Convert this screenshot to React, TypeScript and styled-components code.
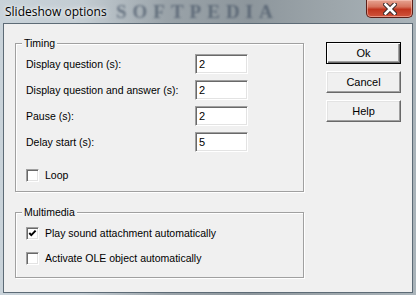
import React from "react";
import styled, { createGlobalStyle } from "styled-components";

const GlobalStyle = createGlobalStyle`
  html, body {
    margin: 0;
    padding: 0;
    background: #a9b6c0;
  }
  * {
    box-sizing: border-box;
  }
`;

const Window = styled.div`
  width: 416px;
  height: 295px;
  display: flex;
  flex-direction: column;
  overflow: hidden;
  background: linear-gradient(
    to right,
    #c9d3da 0%,
    #c3ccd2 20%,
    #9aa3a9 40%,
    #8d969c 60%,
    #9da6ab 80%,
    #aab4ba 100%
  );
  font-family: "Liberation Sans", Arial, sans-serif;
  font-size: 10.5px;
  color: #000;
`;

const TitleBar = styled.div`
  position: relative;
  height: 23px;
  flex: none;
  display: flex;
  align-items: flex-start;
`;

const Watermark = styled.span`
  position: absolute;
  left: 116px;
  top: 1px;
  font-family: "Liberation Serif", "DejaVu Serif", serif;
  font-weight: bold;
  font-size: 19px;
  line-height: 22px;
  letter-spacing: 6px;
  color: rgba(52, 68, 88, 0.55);
  filter: blur(1px);
  pointer-events: none;
`;

const Title = styled.span`
  position: relative;
  margin: 4px 0 0 5px;
  font-family: "Open Sans", "Noto Sans", sans-serif;
  font-size: 12px;
  line-height: 15px;
  color: #000;
  text-shadow: 0 0 6px rgba(255, 255, 255, 0.9), 0 0 3px rgba(255, 255, 255, 0.9);
`;

const CloseButton = styled.div`
  position: relative;
  margin-left: auto;
  margin-right: 3px;
  width: 47px;
  height: 18px;
  border: 1px solid #5b1f18;
  border-top: none;
  border-radius: 0 0 5px 5px;
  background: linear-gradient(to bottom, #e6a492 0%, #d6735d 40%, #c0351e 55%, #d0543c 100%);
  box-shadow: inset 0 0 0 1px rgba(255, 210, 200, 0.5);
  display: flex;
  align-items: center;
  justify-content: center;
`;

const Client = styled.div`
  flex: 1;
  margin: 0 3px 2px 3px;
  border: 1px solid #5d6b76;
  background: #f0f0f0;
  display: flex;
  align-items: flex-start;
`;

const LeftColumn = styled.div`
  margin: 19px 0 0 11px;
  width: 289px;
  display: flex;
  flex-direction: column;
  gap: 20px;
`;

const GroupBox = styled.div<{ $pad: string }>`
  position: relative;
  border: 1px solid #a0a0a0;
  box-shadow: inset 1px 1px 0 #fff, 1px 1px 0 #fff;
  padding: ${(p) => p.$pad};
`;

const Caption = styled.span`
  position: absolute;
  top: -7px;
  left: 6px;
  padding: 0 2px;
  line-height: 13px;
  background: #f0f0f0;
`;

const FieldGrid = styled.div`
  display: grid;
  grid-template-columns: 169px 53px;
  grid-auto-rows: 20px;
  row-gap: 6px;
  align-items: center;
`;

const FieldLabel = styled.span`
  line-height: 13px;
`;

const Field = styled.div`
  width: 53px;
  height: 20px;
  background: #fff;
  border: 1px solid;
  border-color: #a0a0a0 #fff #fff #a0a0a0;
  box-shadow: inset 1px 1px 0 #696969, inset -1px -1px 0 #e3e3e3;
  padding: 3px 0 0 3px;
  font-size: 11px;
  line-height: 13px;
`;

const CheckRow = styled.div<{ $top: number }>`
  margin-top: ${(p) => p.$top}px;
  display: flex;
  align-items: center;
  gap: 6px;
  height: 13px;
  line-height: 13px;
`;

const CheckBox = styled.div`
  width: 13px;
  height: 13px;
  flex: none;
  background: #fff;
  border: 1px solid;
  border-color: #a0a0a0 #fff #fff #a0a0a0;
  box-shadow: inset 1px 1px 0 #696969, inset -1px -1px 0 #e3e3e3;
  display: flex;
  align-items: center;
  justify-content: center;
`;

const ButtonColumn = styled.div`
  margin: 18px 0 0 22px;
  display: flex;
  flex-direction: column;
  gap: 7px;
`;

const Button = styled.div<{ $default?: boolean }>`
  width: 75px;
  height: 22px;
  display: flex;
  align-items: center;
  justify-content: center;
  background: #f0f0f0;
  border: 1px solid;
  border-color: ${(p) => (p.$default ? "#000" : "#fff #696969 #696969 #fff")};
  box-shadow: ${(p) =>
    p.$default
      ? "inset 1px 1px 0 #fff, inset -1px -1px 0 #696969, inset -2px -2px 0 #a0a0a0"
      : "inset -1px -1px 0 #a0a0a0, inset 1px 1px 0 #e3e3e3"};
  font-size: 11px;
  line-height: 13px;
`;

const timing = [
  { label: "Display question (s):", value: "2" },
  { label: "Display question and answer (s):", value: "2" },
  { label: "Pause (s):", value: "2" },
  { label: "Delay start (s):", value: "5" },
];

const Check = ({ checked }: { checked?: boolean }) => (
  <CheckBox>
    {checked && (
      <svg width="9" height="9" viewBox="0 0 9 9">
        <path d="M1.3 4 L3.3 6.2 L7.6 1.6" fill="none" stroke="#000" strokeWidth="1.9" />
      </svg>
    )}
  </CheckBox>
);

export default function App() {
  return (
    <>
      <GlobalStyle />
      <Window>
        <TitleBar>
          <Watermark>SOFTPEDIA</Watermark>
          <Title>Slideshow options</Title>
          <CloseButton>
            <svg width="14" height="12" viewBox="0 0 14 12">
              <path d="M2.5 1.5 L11.5 10.5 M11.5 1.5 L2.5 10.5" stroke="#3a2a2a" strokeWidth="4.6" strokeLinecap="square" />
              <path d="M2.5 1.5 L11.5 10.5 M11.5 1.5 L2.5 10.5" stroke="#fff" strokeWidth="2.6" strokeLinecap="square" />
            </svg>
          </CloseButton>
        </TitleBar>
        <Client>
          <LeftColumn>
            <GroupBox $pad="10px 10px 9px 10px">
              <Caption>Timing</Caption>
              <FieldGrid>
                {timing.map((t) => (
                  <React.Fragment key={t.label}>
                    <FieldLabel>{t.label}</FieldLabel>
                    <Field>{t.value}</Field>
                  </React.Fragment>
                ))}
              </FieldGrid>
              <CheckRow $top={17}>
                <Check />
                <span>Loop</span>
              </CheckRow>
            </GroupBox>
            <GroupBox $pad="14px 10px 12px 10px">
              <Caption>Multimedia</Caption>
              <CheckRow $top={0}>
                <Check checked />
                <span>Play sound attachment automatically</span>
              </CheckRow>
              <CheckRow $top={12}>
                <Check />
                <span>Activate OLE object automatically</span>
              </CheckRow>
            </GroupBox>
          </LeftColumn>
          <ButtonColumn>
            <Button $default>Ok</Button>
            <Button>Cancel</Button>
            <Button>Help</Button>
          </ButtonColumn>
        </Client>
      </Window>
    </>
  );
}
